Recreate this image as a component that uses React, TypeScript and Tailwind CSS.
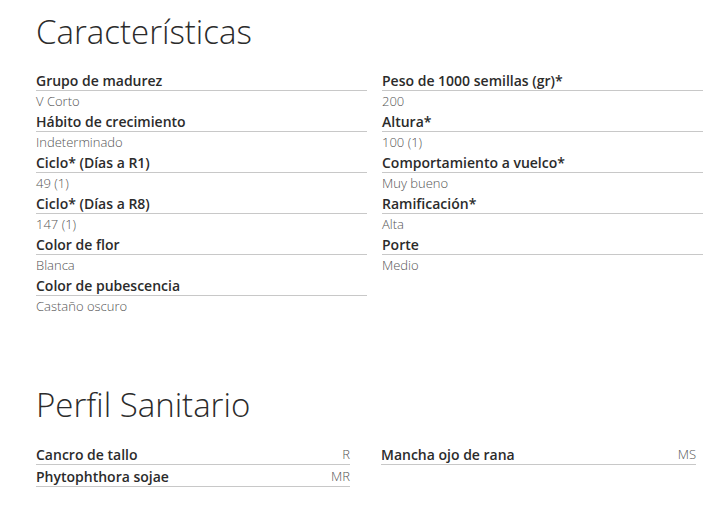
type Item = { label: string; value: string };

const leftItems: Item[] = [
  { label: 'Grupo de madurez', value: 'V Corto' },
  { label: 'Hábito de crecimiento', value: 'Indeterminado' },
  { label: 'Ciclo* (Días a R1)', value: '49 (1)' },
  { label: 'Ciclo* (Días a R8)', value: '147 (1)' },
  { label: 'Color de flor', value: 'Blanca' },
  { label: 'Color de pubescencia', value: 'Castaño oscuro' },
];

const rightItems: Item[] = [
  { label: 'Peso de 1000 semillas (gr)*', value: '200' },
  { label: 'Altura*', value: '100 (1)' },
  { label: 'Comportamiento a vuelco*', value: 'Muy bueno' },
  { label: 'Ramificación*', value: 'Alta' },
  { label: 'Porte', value: 'Medio' },
];

const sanitaryLeft: Item[] = [
  { label: 'Cancro de tallo', value: 'R' },
  { label: 'Phytophthora sojae', value: 'MR' },
];

const sanitaryRight: Item[] = [{ label: 'Mancha ojo de rana', value: 'MS' }];

function FeatureList({ items }: { items: Item[] }) {
  return (
    <div>
      {items.map((item) => (
        <div key={item.label}>
          <p className="border-b border-[#c8c8c8] text-[14px] font-semibold leading-[19px] text-[#2b2b2b]">{item.label}</p>
          <p className="text-[13px] font-light leading-[21px] text-[#555]">{item.value}</p>
        </div>
      ))}
    </div>
  );
}

function SanitaryList({ items }: { items: Item[] }) {
  return (
    <div>
      {items.map((item) => (
        <div key={item.label} className="flex items-center justify-between border-b border-[#c8c8c8] pt-[2px] leading-[19px]">
          <span className="text-[14px] font-semibold text-[#2b2b2b]">{item.label}</span>
          <span className="text-[13px] font-light text-[#555]">{item.value}</span>
        </div>
      ))}
    </div>
  );
}

export default function App() {
  return (
    <div className="min-h-[527px] bg-white px-[36px] pt-[12px] font-['Open_Sans',sans-serif]">
      <h2 className="text-[33px] font-light leading-[40px] text-[#2b2b2b]">Características</h2>

      <div className="mt-[19px] grid grid-cols-[331px_321px] gap-x-[15px]">
        <FeatureList items={leftItems} />
        <FeatureList items={rightItems} />
      </div>

      <h2 className="mt-[68px] text-[33px] font-light leading-[40px] text-[#2b2b2b]">Perfil Sanitario</h2>

      <div className="mt-[18px] grid grid-cols-[314px_315px] gap-x-[31px]">
        <SanitaryList items={sanitaryLeft} />
        <SanitaryList items={sanitaryRight} />
      </div>
    </div>
  );
}
